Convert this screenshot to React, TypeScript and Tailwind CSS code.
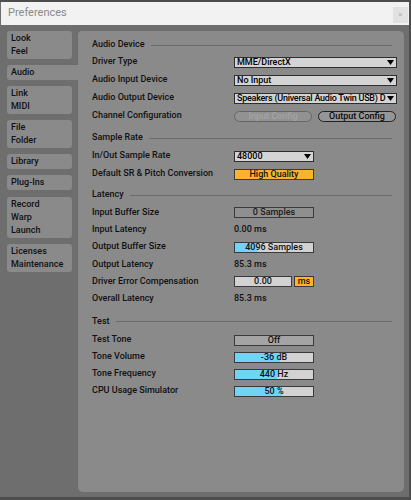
import React from "react";

const font = { fontFamily: "Roboto, 'Liberation Sans', Arial, sans-serif" };

function Tab({ lines, active }: { lines: string[]; active?: boolean }) {
  return (
    <div
      className={
        "bg-[#8a8a8a] pl-[4px] py-[1px] flex flex-col justify-center text-[9px] font-medium text-[#111] leading-[13px] " +
        (active ? "rounded-l-[3px] mr-0" : "rounded-[3px] mr-[6px]")
      }
    >
      {lines.map((l) => (
        <div key={l}>{l}</div>
      ))}
    </div>
  );
}

function Header({ title }: { title: string }) {
  return (
    <div className="flex items-center h-[12px] pr-[5px] text-[9px] font-medium text-[#111]">
      <span className="mr-[6px]">{title}</span>
      <div className="flex-1 h-px bg-[#6c6c6c]" />
    </div>
  );
}

function Row({ label, children, h = "h-[18px]" }: { label: string; children?: React.ReactNode; h?: string }) {
  return (
    <div className={"flex items-center " + h}>
      <div className="w-[142px] text-[9px] font-medium text-[#111] whitespace-nowrap">{label}</div>
      <div className="flex items-center">{children}</div>
    </div>
  );
}

function Dropdown({ text, w, tight }: { text: string; w: string; tight?: boolean }) {
  return (
    <div className={"h-[11px] border border-[#2e2e2e] bg-[#d4d4d4] flex items-center pl-[2px] pr-[2px] " + w}>
      <span
        className={
          "flex-1 overflow-hidden whitespace-nowrap text-[9px] font-medium text-black leading-none " +
          (tight ? "tracking-[-0.25px]" : "")
        }
      >
        {text}
      </span>
      <svg width="7" height="5" viewBox="0 0 7 5" className="shrink-0">
        <polygon points="0,0 7,0 3.5,5" fill="#000" />
      </svg>
    </div>
  );
}

function Bar({ text, pct }: { text: string; pct: number }) {
  return (
    <div className="relative h-[11px] w-[80px] border border-[#3a3a3a] bg-[#d2d2d2] flex items-center justify-center overflow-hidden">
      <div className="absolute left-0 top-0 bottom-0 bg-[#6fd4f8]" style={{ width: pct + "%" }} />
      <span className="relative text-[9px] font-medium text-[#111] leading-none">{text}</span>
    </div>
  );
}

function Box({ text, cls }: { text: string; cls: string }) {
  return (
    <div className={"h-[11px] border flex items-center justify-center text-[9px] font-medium leading-none " + cls}>
      {text}
    </div>
  );
}

export default function App() {
  return (
    <div className="w-[411px] h-[500px] bg-[#4d4d4d] pt-[2px] overflow-hidden" style={font}>
      <div className="w-[409px] h-[495px] flex flex-col bg-[#6e6e6e]">
        <div className="h-[23px] bg-[#f2f2f2] flex items-center pl-[7px] pr-[1px] ml-[1px]">
          <span className="flex-1 text-[11px] text-[#8a8a8a]">Preferences</span>
          <div className="w-[15px] h-[16px] bg-[#e2e2e2] flex items-center justify-center text-[8px] text-[#b0b0b0] mt-[2px]">×</div>
        </div>
        <div className="flex-1 flex pl-[7px] pt-[6px] pr-[5px] pb-[5px]">
          <div className="w-[71px] flex flex-col">
            <div className="h-[28px] flex flex-col"><div className="flex-1 flex flex-col"><Tab lines={["Look", "Feel"]} /></div></div>
            <div className="mt-[6px] h-[15px] flex flex-col"><Tab lines={["Audio"]} active /></div>
            <div className="mt-[6px] h-[28px] flex flex-col"><Tab lines={["Link", "MIDI"]} /></div>
            <div className="mt-[6px] h-[28px] flex flex-col"><Tab lines={["File", "Folder"]} /></div>
            <div className="mt-[6px] h-[15px] flex flex-col"><Tab lines={["Library"]} /></div>
            <div className="mt-[6px] h-[16px] flex flex-col"><Tab lines={["Plug-Ins"]} /></div>
            <div className="mt-[6px] h-[41px] flex flex-col"><Tab lines={["Record", "Warp", "Launch"]} /></div>
            <div className="mt-[6px] h-[26px] flex flex-col"><Tab lines={["Licenses", "Maintenance"]} /></div>
          </div>
          <div className="flex-1 bg-[#8a8a8a] rounded-[5px] rounded-tl-[4px] pl-[14px] pr-[7px] pt-[8px] flex flex-col">
            <Header title="Audio Device" />
            <div className="h-[2px]" />
            <Row label="Driver Type"><Dropdown text="MME/DirectX" w="w-[163px]" /></Row>
            <Row label="Audio Input Device"><Dropdown text="No Input" w="w-[163px]" /></Row>
            <Row label="Audio Output Device"><Dropdown text="Speakers (Universal Audio Twin USB) D" w="w-[163px]" tight /></Row>
            <Row label="Channel Configuration">
              <div className="flex gap-[6px]">
                <div className="w-[78px] h-[11px] rounded-full border border-[#666] bg-[#929292] flex items-center justify-center text-[9px] font-medium text-[#a4a4a4] leading-none">Input Config</div>
                <div className="w-[78px] h-[11px] rounded-full border border-[#222] bg-[#969696] flex items-center justify-center text-[9px] font-medium text-[#0c0c0c] leading-none">Output Config</div>
              </div>
            </Row>
            <div className="h-[7px]" />
            <Header title="Sample Rate" />
            <div className="h-[3px]" />
            <Row label="In/Out Sample Rate"><Dropdown text="48000" w="w-[80px]" /></Row>
            <Row label="Default SR & Pitch Conversion">
              <Box text="High Quality" cls="w-[80px] border-[#3a3a3a] bg-[#ffb32c] text-[#111]" />
            </Row>
            <div className="h-[6px]" />
            <Header title="Latency" />
            <div className="h-[3px]" />
            <Row label="Input Buffer Size" h="h-[17.25px]">
              <Box text="0 Samples" cls="w-[80px] border-[#3a3a3a] bg-[#8f8f8f] text-[#1a1a1a]" />
            </Row>
            <Row label="Input Latency" h="h-[17.25px]">
              <span className="text-[9px] font-medium text-[#111]">0.00 ms</span>
            </Row>
            <Row label="Output Buffer Size" h="h-[17.25px]"><Bar text="4096 Samples" pct={30} /></Row>
            <Row label="Output Latency" h="h-[17.25px]">
              <span className="text-[9px] font-medium text-[#111]">85.3 ms</span>
            </Row>
            <Row label="Driver Error Compensation" h="h-[17.25px]">
              <div className="flex gap-[2px]">
                <Box text="0.00" cls="w-[58px] border-[#3a3a3a] bg-[#d2d2d2] text-[#111]" />
                <Box text="ms" cls="w-[20px] border-[#3a3a3a] bg-[#ffb32c] text-[#111]" />
              </div>
            </Row>
            <Row label="Overall Latency" h="h-[17.25px]">
              <span className="text-[9px] font-medium text-[#111]">85.3 ms</span>
            </Row>
            <div className="h-[8px]" />
            <Header title="Test" />
            <div className="h-[4px]" />
            <Row label="Test Tone" h="h-[17px]">
              <Box text="Off" cls="w-[80px] border-[#3a3a3a] bg-[#a4a4a4] text-[#111]" />
            </Row>
            <Row label="Tone Volume" h="h-[17px]"><Bar text="-36 dB" pct={58} /></Row>
            <Row label="Tone Frequency" h="h-[17px]"><Bar text="440 Hz" pct={54} /></Row>
            <Row label="CPU Usage Simulator" h="h-[17px]"><Bar text="50 %" pct={60} /></Row>
          </div>
        </div>
      </div>
    </div>
  );
}
